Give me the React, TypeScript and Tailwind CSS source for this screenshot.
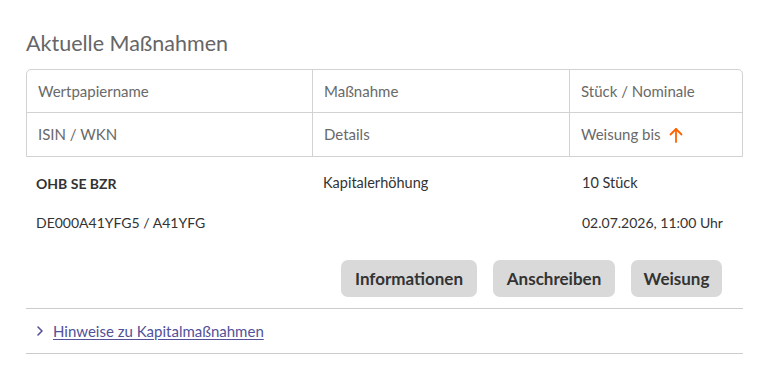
import React from "react";

export default function App() {
  const font = { fontFamily: "Lato, 'Noto Sans', sans-serif" };
  return (
    <div className="w-[768px] h-[392px] bg-white" style={font}>
      <div className="pl-[26px] pr-[25px] pt-[29px]">
        <h2 className="text-[21.5px] leading-[28px] text-[#666666] font-normal">Aktuelle Maßnahmen</h2>
        <div className="mt-[12px] border border-[#d2d2d2] rounded-t-[5px] text-[15px] text-[#696969]">
          <div className="grid grid-cols-[286px_257px_1fr] h-[43px] border-b border-[#d2d2d2]">
            <div className="flex items-center pl-[11px] border-r border-[#d2d2d2]">Wertpapiername</div>
            <div className="flex items-center pl-[11px] border-r border-[#d2d2d2]">Maßnahme</div>
            <div className="flex items-center pl-[11px]">Stück / Nominale</div>
          </div>
          <div className="grid grid-cols-[286px_257px_1fr] h-[43px]">
            <div className="flex items-center pl-[11px] border-r border-[#d2d2d2]">ISIN / WKN</div>
            <div className="flex items-center pl-[11px] border-r border-[#d2d2d2]">Details</div>
            <div className="flex items-center pl-[11px] gap-[8px]">
              <span>Weisung bis</span>
              <svg width="14" height="16" viewBox="0 0 14 16" fill="none" stroke="#ff6200" strokeWidth="1.8" strokeLinecap="round" strokeLinejoin="round">
                <path d="M7 15V2" />
                <path d="M1.5 7.5L7 2l5.5 5.5" />
              </svg>
            </div>
          </div>
        </div>
        <div className="grid grid-cols-[287px_257px_1fr] text-[14.5px] text-[#333333] pt-[14px]">
          <div className="pl-[10px] h-[24px] flex items-center font-bold text-[14px]">OHB SE BZR</div>
          <div className="pl-[10px] h-[24px] flex items-center">Kapitalerhöhung</div>
          <div className="pl-[12px] h-[24px] flex items-center">10 Stück</div>
          <div className="pl-[10px] h-[24px] mt-[15px] flex items-center text-[14px]">DE000A41YFG5 / A41YFG</div>
          <div className="h-[24px] mt-[15px]"></div>
          <div className="pl-[12px] h-[24px] mt-[15px] flex items-center text-[14px]">02.07.2026, 11:00 Uhr</div>
        </div>
        <div className="flex justify-end gap-[16px] pr-[21px] mt-[26px]">
          <button className="h-[37px] w-[136px] rounded-[7px] bg-[#d9d9d9] text-[17px] font-bold text-[#333333]">Informationen</button>
          <button className="h-[37px] w-[122px] rounded-[7px] bg-[#d9d9d9] text-[17px] font-bold text-[#333333]">Anschreiben</button>
          <button className="h-[37px] w-[91px] rounded-[7px] bg-[#d9d9d9] text-[17px] font-bold text-[#333333]">Weisung</button>
        </div>
        <div className="mt-[11px] border-t border-[#cccccc] border-b h-[46px] flex items-center pl-[10px] gap-[9px]">
          <svg width="8" height="12" viewBox="0 0 8 12" fill="none" stroke="#525199" strokeWidth="1.6" strokeLinecap="round" strokeLinejoin="round">
            <path d="M2 2l4 4-4 4" />
          </svg>
          <a className="text-[15px] text-[#525199] underline underline-offset-2" href="#">Hinweise zu Kapitalmaßnahmen</a>
        </div>
      </div>
    </div>
  );
}
